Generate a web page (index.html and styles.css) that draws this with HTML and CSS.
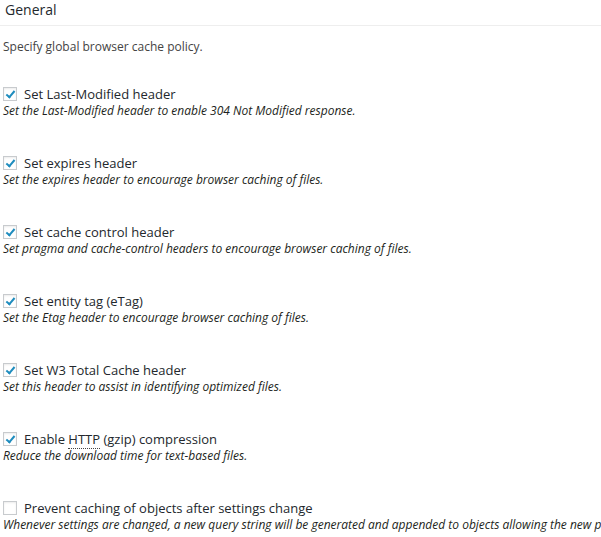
FILE: index.html
```html
<!DOCTYPE html>
<html>
<head>
<meta charset="utf-8">
<link rel="stylesheet" href="styles.css">
</head>
<body>
<div class="panel">
  <h3 class="panel-title">General</h3>
  <div class="panel-body">
    <p class="intro">Specify global browser cache policy.</p>
    <div class="option">
      <label class="option-label"><span class="cb checked"></span>Set Last-Modified header</label>
      <p class="desc">Set the Last-Modified header to enable 304 Not Modified response.</p>
    </div>
    <div class="option">
      <label class="option-label"><span class="cb checked"></span>Set expires header</label>
      <p class="desc">Set the expires header to encourage browser caching of files.</p>
    </div>
    <div class="option">
      <label class="option-label"><span class="cb checked"></span>Set cache control header</label>
      <p class="desc">Set pragma and cache-control headers to encourage browser caching of files.</p>
    </div>
    <div class="option">
      <label class="option-label"><span class="cb checked"></span>Set entity tag (eTag)</label>
      <p class="desc">Set the Etag header to encourage browser caching of files.</p>
    </div>
    <div class="option">
      <label class="option-label"><span class="cb checked"></span>Set W3 Total Cache header</label>
      <p class="desc">Set this header to assist in identifying optimized files.</p>
    </div>
    <div class="option">
      <label class="option-label"><span class="cb checked"></span>Enable <abbr class="abbr">HTTP</abbr> (gzip) compression</label>
      <p class="desc">Reduce the download time for text-based files.</p>
    </div>
    <div class="option">
      <label class="option-label"><span class="cb"></span>Prevent caching of objects after settings change</label>
      <p class="desc">Whenever settings are changed, a new query string will be generated and appended to objects allowing the new policy to be applied.</p>
    </div>
  </div>
</div>
</body>
</html>
```

FILE: styles.css
```css
html, body {
  margin: 0;
  padding: 0;
  background: #fff;
}
body {
  font-family: "Open Sans", "DejaVu Sans", sans-serif;
  color: #444;
  overflow: hidden;
  width: 601px;
}
.panel-title {
  margin: 0;
  padding: 0 5px;
  height: 25px;
  line-height: 20px;
  font-size: 14px;
  font-weight: 400;
  color: #23282d;
  border-bottom: 1px solid #eeeeee;
}
.panel-body {
  padding: 0 3px;
}
.intro {
  margin: 12px 0 0;
  font-size: 12px;
  line-height: 17px;
  color: #444;
}
.option {
  margin-top: 31px;
}
.option + .option {
  margin-top: 36px;
}
.option-label {
  display: block;
  height: 17px;
  font-size: 13px;
  line-height: 17px;
  color: #23282d;
  white-space: nowrap;
}
.cb {
  display: inline-block;
  vertical-align: top;
  box-sizing: border-box;
  width: 14px;
  height: 14px;
  margin: 1px 7px 0 0;
  border: 1px solid #c8cbce;
  background: #fff;
  box-shadow: inset 0 1px 2px rgba(0,0,0,.08);
  position: relative;
}
.cb.checked::after {
  content: "";
  position: absolute;
  left: 4px;
  top: 1px;
  width: 3px;
  height: 7px;
  border: solid #1e8cbe;
  border-width: 0 2px 2px 0;
  transform: rotate(40deg);
}
.abbr {
  text-decoration: none;
  border-bottom: 1px dotted #444;
}
.desc {
  margin: 0;
  font-size: 12px;
  line-height: 16px;
  font-style: italic;
  color: #1d1f21;
  white-space: nowrap;
}
```
